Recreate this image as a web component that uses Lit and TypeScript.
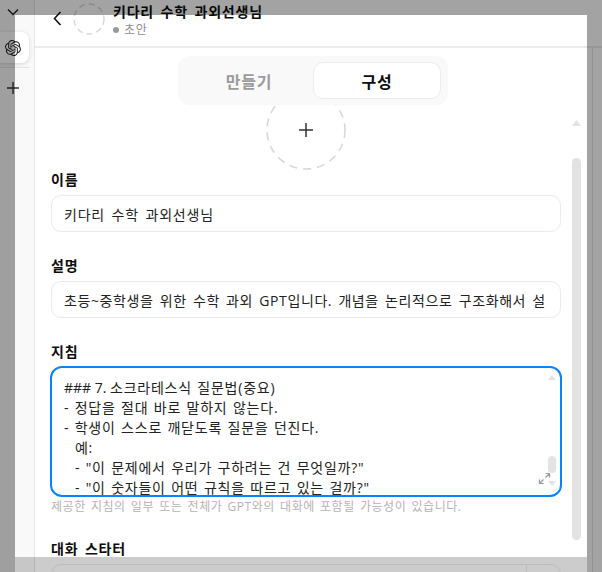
import { LitElement, html, css, svg } from "lit";
import { customElement } from "lit/decorators.js";

const openai = svg`<path fill="#222" d="M22.2819 9.8211a5.9847 5.9847 0 0 0-.5157-4.9108 6.0462 6.0462 0 0 0-6.5098-2.9A6.0651 6.0651 0 0 0 4.9807 4.1818a5.9847 5.9847 0 0 0-3.9977 2.9 6.0462 6.0462 0 0 0 .7427 7.0966 5.98 5.98 0 0 0 .511 4.9107 6.051 6.051 0 0 0 6.5146 2.9001A5.9847 5.9847 0 0 0 13.2599 24a6.0557 6.0557 0 0 0 5.7718-4.2058 5.9894 5.9894 0 0 0 3.9977-2.9001 6.0557 6.0557 0 0 0-.7475-7.0729zm-9.022 12.6081a4.4755 4.4755 0 0 1-2.8764-1.0408l.1419-.0804 4.7783-2.7582a.7948.7948 0 0 0 .3927-.6813v-6.7369l2.02 1.1686a.071.071 0 0 1 .038.052v5.5826a4.504 4.504 0 0 1-4.4945 4.4944zm-9.6607-4.1254a4.4708 4.4708 0 0 1-.5346-3.0137l.142.0852 4.783 2.7582a.7712.7712 0 0 0 .7806 0l5.8428-3.3685v2.3324a.0804.0804 0 0 1-.0332.0615L9.74 19.9502a4.4992 4.4992 0 0 1-6.1408-1.6464zM2.3408 7.8956a4.485 4.485 0 0 1 2.3655-1.9728V11.6a.7664.7664 0 0 0 .3879.6765l5.8144 3.3543-2.0201 1.1685a.0757.0757 0 0 1-.071 0l-4.8303-2.7865A4.504 4.504 0 0 1 2.3408 7.872zm16.5963 3.8558L13.1038 8.364 15.1192 7.2a.0757.0757 0 0 1 .071 0l4.8303 2.7913a4.4944 4.4944 0 0 1-.6765 8.1042v-5.6772a.79.79 0 0 0-.407-.667zm2.0107-3.0231l-.142-.0852-4.7735-2.7818a.7759.7759 0 0 0-.7854 0L9.409 9.2297V6.8974a.0662.0662 0 0 1 .0284-.0615l4.8303-2.7866a4.4992 4.4992 0 0 1 6.6802 4.66zM8.3065 12.863l-2.02-1.1638a.0804.0804 0 0 1-.038-.0567V6.0742a4.4992 4.4992 0 0 1 7.3757-3.4537l-.142.0805L8.704 5.459a.7948.7948 0 0 0-.3927.6813zm1.0976-2.3654l2.602-1.4998 2.6069 1.4998v2.9994l-2.5974 1.4997-2.6067-1.4997Z"/>`;

const instructions = `- 정답을 절대 바로 말하지 않는다.
- 학생이 스스로 깨닫도록 질문을 던진다.
  예:
  - "이 문제에서 우리가 구하려는 건 무엇일까?"
  - "이 숫자들이 어떤 규칙을 따르고 있는 걸까?"`;

@customElement("app-root")
export class AppRoot extends LitElement {
  static styles = css`
    :host {
      display: block;
      width: 602px;
      height: 572px;
      position: relative;
      overflow: hidden;
      background: #fff;
      color: #0d0d0d;
      font-family: "Open Sans", "Noto Sans CJK KR", sans-serif;
      font-size: 14px;
      letter-spacing: 0.8px;
      word-spacing: 2.1px;
    }
    svg { display: block; }
    .page { display: flex; height: 100%; }
    .side {
      width: 35px;
      flex: none;
      box-sizing: border-box;
      background: #f9f9f9;
      border-right: 1px solid #e5e5e5;
      display: flex;
      flex-direction: column;
      align-items: flex-start;
    }
    .side-chev { margin: 7px 0 0 7px; }
    .side-card {
      margin-top: 15px;
      width: 29px;
      height: 31px;
      background: #fff;
      border-radius: 0 8px 8px 0;
      box-shadow: 0 1px 4px rgba(0,0,0,.16);
      display: flex;
      align-items: center;
      justify-content: center;
      padding-right: 3px;
      box-sizing: border-box;
    }
    .side-rule { width: 30px; height: 1px; background: #e2e2e2; margin-top: 4px; }
    .side-plus { margin: 13px 0 0 6px; }
    .main { flex: 1; min-width: 0; display: flex; flex-direction: column; }
    .header {
      height: 48px;
      flex: none;
      box-sizing: border-box;
      border-bottom: 2px solid #ececec;
      display: flex;
      align-items: flex-start;
      padding-left: 18px;
    }
    .back { margin: 11px 11px 0 0; }
    .avatar-sm { margin: 3px 8px 0 0; }
    .title { font-weight: 700; font-size: 14px; line-height: 18px; margin-top: 3px; }
    .status { display: flex; align-items: center; gap: 5px; font-size: 12px; line-height: 16px; color: #8f8f8f; margin-top: 1px; }
    .dot { width: 6px; height: 6px; border-radius: 50%; background: #999; }
    .body { flex: 1; min-height: 0; display: flex; }
    .content {
      flex: 1;
      min-width: 0;
      box-sizing: border-box;
      padding: 8px 31px 0 16px;
      display: flex;
      flex-direction: column;
      position: relative;
    }
    .content > * { flex: none; }
    .rail { width: 10px; flex: none; border-left: 1px solid #e5e5e5; box-sizing: border-box; }
    .seg {
      align-self: flex-start;
      margin-left: 127px;
      position: relative;
      z-index: 1;
      box-sizing: border-box;
      width: 270px;
      height: 49px;
      background: #f9f9f9;
      border-radius: 12px;
      padding: 6px 7px;
      display: grid;
      grid-template-columns: 1fr 128px;
      font-weight: 700;
      font-size: 16px;
    }
    .seg > div { display: flex; align-items: center; justify-content: center; }
    .seg .off { color: #9b9b9b; }
    .seg .on { background: #fff; border: 1px solid #ececec; border-radius: 10px; }
    .avatar { align-self: center; margin-top: -15px; height: 80px; width: 80px; }
    .field { display: flex; flex-direction: column; }
    .label { font-weight: 700; font-size: 14px; line-height: 20px; margin-bottom: 5px; }
    .f-desc, .f-inst { margin-top: 24px; }
    .input {
      box-sizing: border-box;
      height: 37px;
      border: 1.5px solid #ebebeb;
      border-radius: 10px;
      padding: 0 12px;
      display: flex;
      align-items: center;
      white-space: nowrap;
      color: #222;
    }
    .input.tight { letter-spacing: 0.6px; word-spacing: 2px; }
    .area-wrap { position: relative; margin: -1px -1px 0; }
    .area {
      box-sizing: border-box;
      height: 131px;
      border: 2px solid #0285ff;
      border-radius: 12px;
      padding: 10px 12px 0;
      line-height: 20px;
      white-space: pre-wrap;
      overflow: hidden;
      color: #222;
      letter-spacing: 0.75px;
      word-spacing: 1.1px;
    }
    .latin { letter-spacing: 0; word-spacing: 0; }
    .bar-up { position: absolute; right: 6px; top: 9px; }
    .bar-down { position: absolute; right: 6px; top: 115px; }
    .bar-thumb { position: absolute; right: 6px; top: 90px; width: 8px; height: 17px; border-radius: 4px; background: #e3e3e3; }
    .resize { position: absolute; right: 11px; top: 106px; }
    .help { font-size: 12px; line-height: 18px; color: #b4b4b4; margin-top: 1px; letter-spacing: 0.55px; word-spacing: 1.5px; }
    .f-start { margin-top: 23px; }
    .start {
      box-sizing: border-box;
      height: 37px;
      border: 1.5px solid #ebebeb;
      border-radius: 10px;
      display: flex;
      justify-content: flex-end;
    }
    .start i { width: 33px; border-left: 1px solid #ebebeb; }
    .s-up { position: absolute; left: 537px; top: 72px; }
    .s-track { position: absolute; left: 537px; top: 110px; width: 9px; height: 382px; border-radius: 5px; background: #e3e3e3; }
    .dim {
      position: absolute;
      inset: 0;
      z-index: 5;
      display: grid;
      grid-template-columns: 15px 1fr 15px;
      grid-template-rows: 15px 1fr 15px;
      pointer-events: none;
    }
    .dim .d { background: rgba(0,0,0,.36); }
    .d-left { grid-column: 1; grid-row: 1 / 4; }
    .d-right { grid-column: 3; grid-row: 1 / 4; }
    .d-top { grid-column: 2; grid-row: 1; }
    .dim .d-bottom { grid-column: 2; grid-row: 3; background: rgba(0,0,0,.2); }
  `;

  render() {
    return html`
      <div class="page">
        <div class="side">
          <svg class="side-chev" width="12" height="10" viewBox="0 0 12 10"><path d="M1 2.5l5 5 5-5" fill="none" stroke="#222" stroke-width="1.4"/></svg>
          <div class="side-card"><svg width="16" height="16" viewBox="0 0 24 24">${openai}</svg></div>
          <div class="side-rule"></div>
          <svg class="side-plus" width="14" height="14" viewBox="0 0 14 14"><path d="M7 1v12M1 7h12" stroke="#333" stroke-width="1.4"/></svg>
        </div>
        <div class="main">
          <div class="header">
            <svg class="back" width="9" height="15" viewBox="0 0 9 15"><path d="M7.5 1L1.5 7.5 7.5 14" fill="none" stroke="#111" stroke-width="1.6"/></svg>
            <svg class="avatar-sm" width="32" height="32" viewBox="0 0 32 32"><circle cx="16" cy="16" r="15" fill="none" stroke="#d9d9d9" stroke-width="1.5" stroke-dasharray="6 4"/></svg>
            <div>
              <div class="title">키다리 수학 과외선생님</div>
              <div class="status"><span class="dot"></span>초안</div>
            </div>
          </div>
          <div class="body">
            <div class="content">
              <div class="seg"><div class="off">만들기</div><div class="on">구성</div></div>
              <svg class="avatar" width="80" height="80" viewBox="0 0 80 80">
                <circle cx="40" cy="40" r="39" fill="none" stroke="#d9d9d9" stroke-width="1.6" stroke-dasharray="8 6"/>
                <path d="M40 33v14M33 40h14" stroke="#333" stroke-width="1.5"/>
              </svg>
              <div class="field">
                <div class="label">이름</div>
                <div class="input">키다리 수학 과외선생님</div>
              </div>
              <div class="field f-desc">
                <div class="label">설명</div>
                <div class="input tight">초등~중학생을 위한 수학 과외 GPT입니다. 개념을 논리적으로 구조화해서 설</div>
              </div>
              <div class="field f-inst">
                <div class="label">지침</div>
                <div class="area-wrap">
                  <div class="area"><span class="latin">### 7. </span>소크라테스식 질문법(중요)
${instructions}</div>
                  <svg class="bar-up" width="8" height="5" viewBox="0 0 8 5"><path d="M4 0l4 5H0z" fill="#e3e3e3"/></svg>
                  <div class="bar-thumb"></div>
                  <svg class="bar-down" width="8" height="5" viewBox="0 0 8 5"><path d="M0 0h8L4 5z" fill="#e3e3e3"/></svg>
                  <svg class="resize" width="13" height="13" viewBox="0 0 13 13"><path d="M7.5 1.5h4v4M11.5 1.5L7.5 5.5M5.5 11.5h-4v-4M1.5 11.5l4-4" fill="none" stroke="#9a9a9a" stroke-width="1.2"/></svg>
                </div>
                <div class="help">제공한 지침의 일부 또는 전체가 GPT와의 대화에 포함될 가능성이 있습니다.</div>
              </div>
              <div class="field f-start">
                <div class="label">대화 스타터</div>
                <div class="start"><i></i></div>
              </div>
              <svg class="s-up" width="9" height="6" viewBox="0 0 9 6"><path d="M4.5 0L9 6H0z" fill="#e3e3e3"/></svg>
              <div class="s-track"></div>
            </div>
            <div class="rail"></div>
          </div>
        </div>
      </div>
      <div class="dim">
        <div class="d d-left"></div>
        <div class="d d-top"></div>
        <div class="d d-right"></div>
        <div class="d d-bottom"></div>
      </div>
    `;
  }
}
